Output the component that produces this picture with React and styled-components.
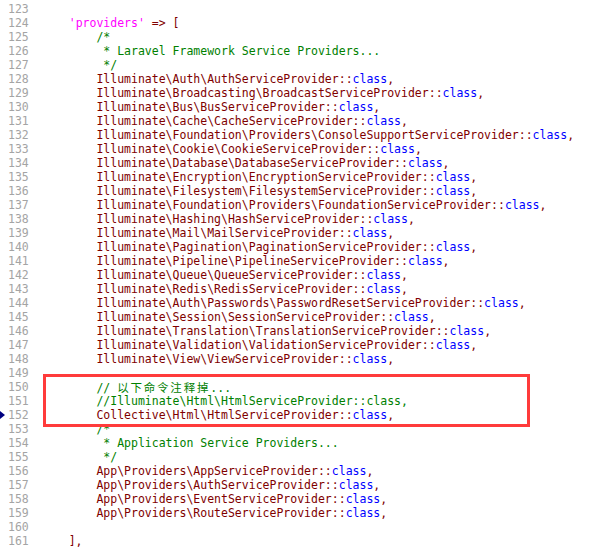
import React from "react";
import styled, { createGlobalStyle } from "styled-components";

const lines = [
  { n: 123, text: "" },
  { n: 124, kind: "key", text: "    'providers' => [" },
  { n: 125, text: "        /*" },
  { n: 126, text: "         * Laravel Framework Service Providers..." },
  { n: 127, text: "         */" },
  { n: 128, text: "        Illuminate\\Auth\\AuthServiceProvider::class," },
  { n: 129, text: "        Illuminate\\Broadcasting\\BroadcastServiceProvider::class," },
  { n: 130, text: "        Illuminate\\Bus\\BusServiceProvider::class," },
  { n: 131, text: "        Illuminate\\Cache\\CacheServiceProvider::class," },
  { n: 132, text: "        Illuminate\\Foundation\\Providers\\ConsoleSupportServiceProvider::class," },
  { n: 133, text: "        Illuminate\\Cookie\\CookieServiceProvider::class," },
  { n: 134, text: "        Illuminate\\Database\\DatabaseServiceProvider::class," },
  { n: 135, text: "        Illuminate\\Encryption\\EncryptionServiceProvider::class," },
  { n: 136, text: "        Illuminate\\Filesystem\\FilesystemServiceProvider::class," },
  { n: 137, text: "        Illuminate\\Foundation\\Providers\\FoundationServiceProvider::class," },
  { n: 138, text: "        Illuminate\\Hashing\\HashServiceProvider::class," },
  { n: 139, text: "        Illuminate\\Mail\\MailServiceProvider::class," },
  { n: 140, text: "        Illuminate\\Pagination\\PaginationServiceProvider::class," },
  { n: 141, text: "        Illuminate\\Pipeline\\PipelineServiceProvider::class," },
  { n: 142, text: "        Illuminate\\Queue\\QueueServiceProvider::class," },
  { n: 143, text: "        Illuminate\\Redis\\RedisServiceProvider::class," },
  { n: 144, text: "        Illuminate\\Auth\\Passwords\\PasswordResetServiceProvider::class," },
  { n: 145, text: "        Illuminate\\Session\\SessionServiceProvider::class," },
  { n: 146, text: "        Illuminate\\Translation\\TranslationServiceProvider::class," },
  { n: 147, text: "        Illuminate\\Validation\\ValidationServiceProvider::class," },
  { n: 148, text: "        Illuminate\\View\\ViewServiceProvider::class," },
  { n: 149, text: "" },
  { n: 150, kind: "cjk", text: "        // ", cjk: "以下命令注释掉", tail: "..." },
  { n: 151, text: "        //Illuminate\\Html\\HtmlServiceProvider::class," },
  { n: 152, mark: true, text: "        Collective\\Html\\HtmlServiceProvider::class," },
  { n: 153, text: "        /*" },
  { n: 154, text: "         * Application Service Providers..." },
  { n: 155, text: "         */" },
  { n: 156, text: "        App\\Providers\\AppServiceProvider::class," },
  { n: 157, text: "        App\\Providers\\AuthServiceProvider::class," },
  { n: 158, text: "        App\\Providers\\EventServiceProvider::class," },
  { n: 159, text: "        App\\Providers\\RouteServiceProvider::class," },
  { n: 160, text: "" },
  { n: 161, text: "    ]," },
];

function renderCode(line) {
  const t = line.text;
  const trimmed = t.trim();
  if (line.kind === "cjk") {
    return (
      <Comment>
        {t}
        <Cjk>{line.cjk}</Cjk>
        {line.tail}
      </Comment>
    );
  }
  if (line.kind === "key") {
    const i = t.indexOf("'");
    const j = t.lastIndexOf("'") + 1;
    return (
      <>
        {t.slice(0, i)}
        <Str>{t.slice(i, j)}</Str>
        <Plain>{t.slice(j)}</Plain>
      </>
    );
  }
  if (trimmed.startsWith("/") || trimmed.startsWith("*")) {
    return <Comment>{t}</Comment>;
  }
  const k = t.indexOf("::class");
  if (k >= 0) {
    return (
      <>
        <Plain>{t.slice(0, k + 2)}</Plain>
        <Keyword>class</Keyword>
        <Plain>{t.slice(k + 7)}</Plain>
      </>
    );
  }
  return <Plain>{t}</Plain>;
}

export default function App() {
  return (
    <>
      <GlobalStyle />
      <Editor>
        {lines.map((line) => (
          <Row key={line.n}>
            <Gutter>
              {line.mark && <Marker />}
              {line.n}
            </Gutter>
            <Code>{renderCode(line)}</Code>
          </Row>
        ))}
        <Highlight />
      </Editor>
    </>
  );
}

////////////////////////// CSS //////////////////////////
const GlobalStyle = createGlobalStyle`
  html, body {
    margin: 0;
    padding: 0;
    background: #ffffff;
  }
`;

const Editor = styled.div`
  position: relative;
  width: 603px;
  height: 550px;
  padding-top: 2px;
  box-sizing: border-box;
  overflow: hidden;
  font-family: "DejaVu Sans Mono", "Liberation Mono", "Noto Sans CJK SC", monospace;
  font-size: 11.5px;
`;

const Row = styled.div`
  display: flex;
  height: 14px;
  line-height: 14px;
  white-space: pre;
`;

const Gutter = styled.div`
  position: relative;
  width: 41px;
  padding-left: 8px;
  box-sizing: border-box;
  color: #a4a4a4;
  flex-shrink: 0;
`;

const Marker = styled.span`
  position: absolute;
  left: 0;
  top: 3px;
  width: 0;
  height: 0;
  border-top: 4px solid transparent;
  border-bottom: 4px solid transparent;
  border-left: 5px solid #000080;
`;

const Code = styled.div`
  flex: 1;
`;

const Plain = styled.span`
  color: #800000;
`;

const Str = styled.span`
  color: #ff00ff;
`;

const Keyword = styled.span`
  color: #0000ff;
`;

const Comment = styled.span`
  color: #008000;
`;

const Cjk = styled.span`
  font-family: "Noto Sans CJK SC", sans-serif;
  font-size: 11.5px;
  letter-spacing: 1.8px;
  line-height: 14px;
`;

const Highlight = styled.div`
  position: absolute;
  left: 43px;
  top: 374px;
  width: 487px;
  height: 53px;
  border: 3px solid #ff3b3b;
  box-sizing: border-box;
  pointer-events: none;
`;
